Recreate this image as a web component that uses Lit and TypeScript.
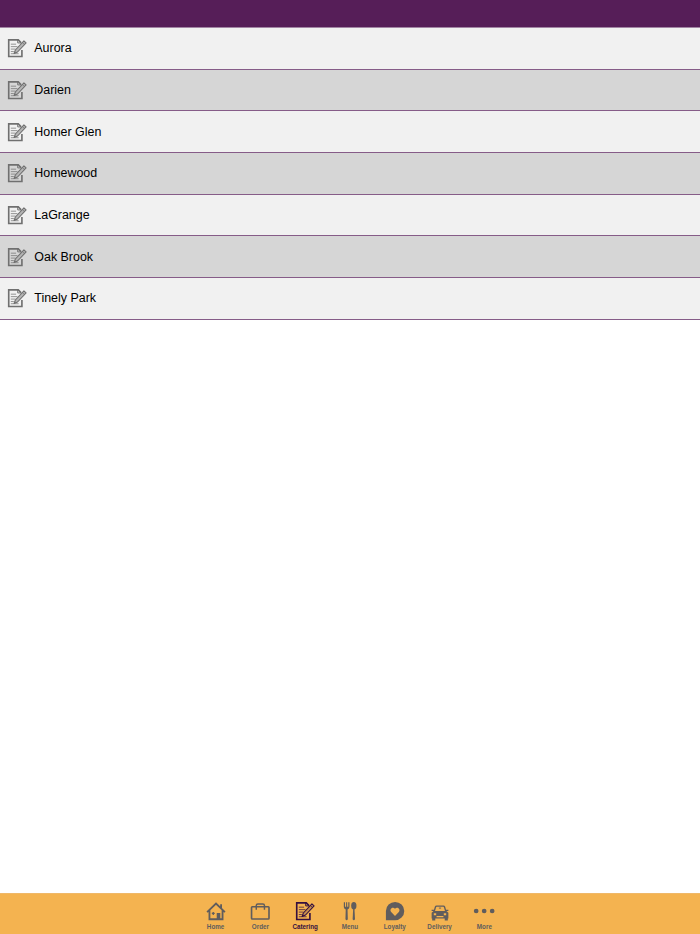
import { LitElement, html, css, svg } from "lit";
import { customElement } from "lit/decorators.js";

const note = svg`
  <path d="M16.4 13.2V20.3H1.9V2H12.4L15.6 5.2" fill="none" stroke="currentColor" stroke-width="1.8"/>
  <path d="M11.8 1.8V5.4H15.4" fill="none" stroke="currentColor" stroke-width="1.1"/>
  <path d="M4.2 6.8H10M4.2 9.5H11.5M4.2 12.2H9.5M4.2 14.9H7.5M4.2 17.3H12.8" stroke="currentColor" stroke-width="1" stroke-opacity=".8"/>
  <path d="M7.8 17L9.2 13.2L18.6 3.2L21 5.4L11.6 15.4Z" fill="var(--pencil)" stroke="currentColor" stroke-width="1.2" stroke-linejoin="round"/>
  <path d="M16.9 5L19.2 7.2" stroke="currentColor" stroke-width=".8"/>
  <path d="M7.8 17L8.6 14.8L10 16.1Z" fill="currentColor"/>`;

const icons: Record<string, unknown> = {
  Home: svg`
    <path d="M1.2 12.2L11 2.8L20.8 12.2M3.8 10.2V20.1H18.2V10.2M16.6 7.6V3.6" fill="none" stroke="currentColor" stroke-width="2"/>
    <rect x="11.8" y="13.2" width="3.9" height="7" fill="currentColor"/>
    <path d="M8 12.1V15.3M6.4 13.7H9.6" stroke="currentColor" stroke-width="1.4"/>`,
  Order: svg`
    <rect x="1.7" y="6.3" width="19.2" height="13.5" rx=".8" fill="none" stroke="currentColor" stroke-width="1.8"/>
    <path d="M6.9 9.6V5Q6.9 3.2 8.7 3.2H14.1Q15.9 3.2 15.9 5V9.6" fill="none" stroke="currentColor" stroke-width="1.6"/>`,
  Catering: note,
  Menu: svg`
    <path d="M4.2 1.4V6.6Q4.2 8.8 6.3 9.3L6 20.2Q7.3 22.2 8.6 20.2L8.3 9.3Q10.4 8.8 10.4 6.6V1.4H9.1V6.4H7.9V1.4H6.7V6.4H5.5V1.4Z" fill="currentColor"/>
    <ellipse cx="15.2" cy="5.3" rx="2.9" ry="4.1" fill="currentColor"/>
    <path d="M14.5 8L13.9 20.2Q15.2 22.2 16.5 20.2L15.9 8Z" fill="currentColor"/>`,
  Loyalty: svg`
    <path d="M1 21.2V11.1A10.1 10.1 0 1 1 11.1 21.2Z" fill="currentColor"/>
    <path d="M11 16.4L6.8 12.2C4.2 8.9 8.7 5.4 11 8.6C13.3 5.4 17.8 8.9 15.2 12.2Z" fill="var(--bar)"/>`,
  Delivery: svg`
    <path d="M4.5 12L6 6.6Q6.3 5.6 7.3 5.6H14.7Q15.7 5.6 16 6.6L17.5 12" fill="none" stroke="currentColor" stroke-width="1.5"/>
    <path d="M1.8 10.3H4.6M20.2 10.3H17.4" stroke="currentColor" stroke-width="1.5"/>
    <path fill-rule="evenodd" d="M4 11H18L20.2 13V19.2H19.6V21.5H16.2V19.2H5.8V21.5H2.4V19.2H1.8V13ZM4.2 13.4V15.7H6.8V13.4ZM15.2 13.4V15.7H17.8V13.4ZM7.2 16.5V17.8H14.8V16.5Z" fill="currentColor"/>
    <path d="M9.8 7.8H12.2" stroke="currentColor" stroke-width="1"/>`,
  More: svg`
    <circle cx="2.4" cy="11" r="2.6" fill="currentColor"/>
    <circle cx="11.2" cy="11" r="2.6" fill="currentColor"/>
    <circle cx="20" cy="11" r="2.6" fill="currentColor"/>`,
};

const locations = ["Aurora", "Darien", "Homer Glen", "Homewood", "LaGrange", "Oak Brook", "Tinely Park"];

@customElement("app-root")
export class AppRoot extends LitElement {
  static styles = css`
    :host {
      display: flex;
      flex-direction: column;
      height: 100vh;
      background: #fff;
      font-family: "Liberation Sans", Arial, sans-serif;
    }
    .header {
      flex: none;
      height: 27px;
      background: #561e58;
    }
    .list {
      flex: 1;
      margin: 0;
      padding: 0;
      list-style: none;
      border-top: 1px solid #a285a4;
    }
    .row {
      display: flex;
      align-items: center;
      box-sizing: border-box;
      height: 41.68px;
      padding-left: 7px;
      gap: 7.3px;
      border-bottom: 1px solid #865c88;
      background: #f1f1f1;
      color: #000;
      font-size: 12.45px;
      line-height: 16px;
    }
    .row:nth-child(even) {
      background: #d6d6d6;
    }
    .note {
      --pencil: #b5b5b5;
      width: 20px;
      height: 20px;
      color: #707070;
    }
    .tabs {
      --bar: #f4b350;
      flex: none;
      display: flex;
      justify-content: center;
      box-sizing: border-box;
      height: 41px;
      padding-top: 7px;
      border-top: 1px solid #efb869;
      background: var(--bar);
    }
    .tab {
      --pencil: #c58d4d;
      display: flex;
      flex-direction: column;
      align-items: center;
      width: 44.8px;
      color: #605d5d;
      font-size: 6.3px;
      font-weight: bold;
      line-height: 8px;
      gap: 1.5px;
    }
    .active {
      color: #35103f;
    }
    .icon {
      width: 20px;
      height: 20px;
      overflow: visible;
    }
  `;

  render() {
    return html`
      <header class="header"></header>
      <ul class="list">
        ${locations.map(
          (name) => html`<li class="row"><svg class="note" viewBox="0 0 22 22">${note}</svg><span>${name}</span></li>`
        )}
      </ul>
      <nav class="tabs">
        ${Object.entries(icons).map(
          ([label, icon]) => html`<div class="tab ${label === "Catering" ? "active" : ""}">
            <svg class="icon" viewBox="0 0 22 22">${icon}</svg><span>${label}</span>
          </div>`
        )}
      </nav>
    `;
  }
}
